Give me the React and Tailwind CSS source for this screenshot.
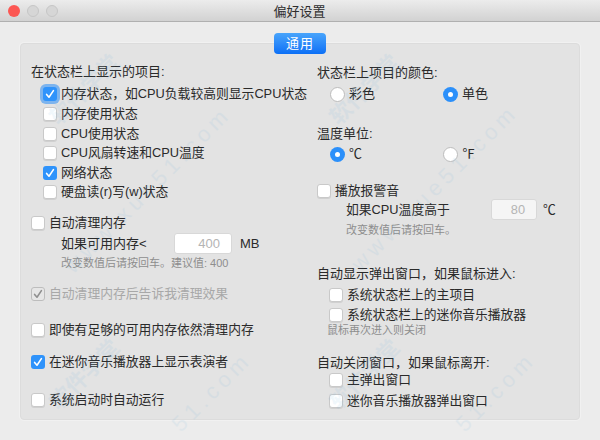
function Check({ checked, focus, disabled }) {
  if (checked) {
    return (
      <span className={`relative flex h-[14px] w-[14px] shrink-0 items-center justify-center rounded-[3px] ${disabled ? "border border-[#bdbdbd] bg-[#e6e6e6]" : "bg-[#2f93fb]"} ${focus ? "shadow-[0_0_0_3px_#7db4ee]" : ""}`}>
        <svg width="10" height="10" viewBox="0 0 10 10" fill="none">
          <path d="M1.6 5.4 L4 8.2 L8.4 1.6" stroke={disabled ? "#8f8f8f" : "#fff"} strokeWidth="1.6" strokeLinecap="round" strokeLinejoin="round" />
        </svg>
      </span>
    );
  }
  return <span className="h-[14px] w-[14px] shrink-0 rounded-[3px] border border-[#c9c9c9] bg-white shadow-[0_1px_0_#d0d0d0]" />;
}

function Row({ className = "", text, checked, focus, disabled }) {
  return (
    <div className={`flex h-[20px] items-center gap-[4px] text-[12.8px] ${className}`}>
      <Check checked={checked} focus={focus} disabled={disabled} />
      <span className={disabled ? "text-[#a8a8a8]" : "text-[#2a2a2a]"}>{text}</span>
    </div>
  );
}

function Radio({ on, text, className = "" }) {
  return (
    <div className={`flex items-center gap-[4px] ${className}`}>
      {on ? (
        <span className="flex h-[15px] w-[15px] items-center justify-center rounded-full bg-[#2c90fa]">
          <span className="h-[5px] w-[5px] rounded-full bg-white" />
        </span>
      ) : (
        <span className="h-[15px] w-[15px] rounded-full border border-[#bcbcbc] bg-white" />
      )}
      <span className="text-[#2a2a2a]">{text}</span>
    </div>
  );
}

const markBase = "pointer-events-none absolute -translate-x-1/2 -translate-y-1/2 -rotate-45 whitespace-nowrap text-[#4fa3d8] opacity-[0.08]";

function Watermark() {
  return (
    <div aria-hidden="true">
      <div className={`${markBase} left-[85px] top-[90px] text-[22px] font-bold`}>软件学堂</div>
      <div className={`${markBase} left-[365px] top-[90px] text-[22px] font-bold`}>软件学堂</div>
      <div className={`${markBase} left-[85px] top-[375px] text-[22px] font-bold`}>软件学堂</div>
      <div className={`${markBase} left-[365px] top-[375px] text-[22px] font-bold`}>软件学堂</div>
      <div className={`${markBase} left-[148px] top-[190px] text-[22px] tracking-[5px]`}>www.xue51.com</div>
      <div className={`${markBase} left-[435px] top-[188px] text-[22px] tracking-[5px]`}>www.xue51.com</div>
      <div className={`${markBase} left-[212px] top-[392px] text-[22px] tracking-[5px]`}>51.com</div>
      <div className={`${markBase} left-[496px] top-[392px] text-[22px] tracking-[5px]`}>51.com</div>
    </div>
  );
}

export default function App() {
  return (
    <div className="relative h-[440px] w-[600px] overflow-hidden bg-[#ececec] text-[13px] leading-[20px] text-[#2a2a2a] [font-family:'Liberation_Sans','Noto_Sans_CJK_SC',sans-serif]">
      <header className="relative flex h-[22px] items-center justify-center border-b border-[#b0b0b0] bg-gradient-to-b from-[#ececec] to-[#d2d2d2]">
        <div className="absolute left-[8px] top-[5px] flex gap-[7px]">
          <span className="h-[12px] w-[12px] rounded-full bg-[#fc5753]" />
          <span className="h-[12px] w-[12px] rounded-full border border-[#c6c6c6] bg-[#d6d6d6]" />
          <span className="h-[12px] w-[12px] rounded-full border border-[#c6c6c6] bg-[#d6d6d6]" />
        </div>
        <span className="translate-x-[-0.5px] translate-y-[1px] text-[13px] text-[#2e2e2e]">偏好设置</span>
      </header>

      <div className="relative mx-[20px] mt-[21px] h-[377px] rounded-[4px] border border-[#dcdcdc] bg-[#e3e3e3] shadow-[0_0_0_1px_#f1f1f1]">
        <button className="absolute left-[253px] top-[-11px] h-[21px] w-[52px] rounded-[4px] bg-gradient-to-b from-[#48a4fb] to-[#0b6ff6] text-[13px] tracking-[1px] text-white">
          通用
        </button>

        <div className="flex">
          <div className="ml-[10px] w-[286px] pt-[18px]">
            <div>在状态栏上显示的项目:</div>
            <div className="ml-[12px] mt-[2px]">
              <Row checked focus text="内存状态，如CPU负载较高则显示CPU状态" />
              <Row text="内存使用状态" />
              <Row text="CPU使用状态" />
              <Row text="CPU风扇转速和CPU温度" className="-mt-[1px]" />
              <Row checked text="网络状态" />
              <Row text="硬盘读(r)写(w)状态" className="-mt-[1px]" />
            </div>

            <Row text="自动清理内存" className="mt-[11px]" />
            <div className="ml-[30px] flex h-[21px] items-center">
              <span className="w-[113px]">如果可用内存&lt;</span>
              <div className="h-[21px] w-[58px] rounded-[3px] border border-[#d8d8d8] bg-white pr-[11px] text-right leading-[19px] text-[#b4b4b4]">400</div>
              <span className="ml-[8px]">MB</span>
            </div>
            <div className="ml-[30px] -mt-[1px] text-[11px] text-[#8e8e8e]">改变数值后请按回车。建议值: 400</div>

            <Row disabled checked text="自动清理内存后告诉我清理效果" className="mt-[11px]" />
            <Row text="即使有足够的可用内存依然清理内存" className="mt-[16px]" />
            <Row checked text="在迷你音乐播放器上显示表演者" className="mt-[12px]" />
            <Row text="系统启动时自动运行" className="mt-[18px]" />
          </div>

          <div className="pt-[19px]">
            <div>状态栏上项目的颜色:</div>
            <div className="ml-[13px] mt-[1px] flex h-[20px] items-center">
              <Radio text="彩色" className="w-[113px]" />
              <Radio on text="单色" />
            </div>
            <div className="mt-[20px]">温度单位:</div>
            <div className="ml-[13px] flex h-[20px] items-center">
              <Radio on text="℃" className="w-[113px]" />
              <Radio text="℉" />
            </div>
            <Row text="播放报警音" className="mt-[17px]" />
            <div className="ml-[29px] -mt-[2px] flex h-[21px] items-center text-[12.8px]">
              <span className="w-[145px]">如果CPU温度高于</span>
              <div className="h-[21px] w-[46px] rounded-[3px] border border-[#d8d8d8] bg-[#f5f5f5] pr-[11px] text-right leading-[19px] text-[#b4b4b4]">80</div>
              <span className="ml-[6px]">℃</span>
            </div>
            <div className="ml-[29px] text-[11px] text-[#8e8e8e]">改变数值后请按回车。</div>

            <div className="mt-[24px]">自动显示弹出窗口，如果鼠标进入:</div>
            <div className="ml-[12px] mt-[1px]">
              <Row text="系统状态栏上的主项目" />
              <Row text="系统状态栏上的迷你音乐播放器" />
            </div>
            <div className="ml-[10px] -mt-[5px] text-[11px] text-[#8e8e8e]">鼠标再次进入则关闭</div>

            <div className="mt-[13px]">自动关闭窗口，如果鼠标离开:</div>
            <div className="ml-[12px] -mt-[3px]">
              <Row text="主弹出窗口" />
              <Row text="迷你音乐播放器弹出窗口" className="mt-[0.5px]" />
            </div>
          </div>
        </div>
      </div>
      <Watermark />
    </div>
  );
}
